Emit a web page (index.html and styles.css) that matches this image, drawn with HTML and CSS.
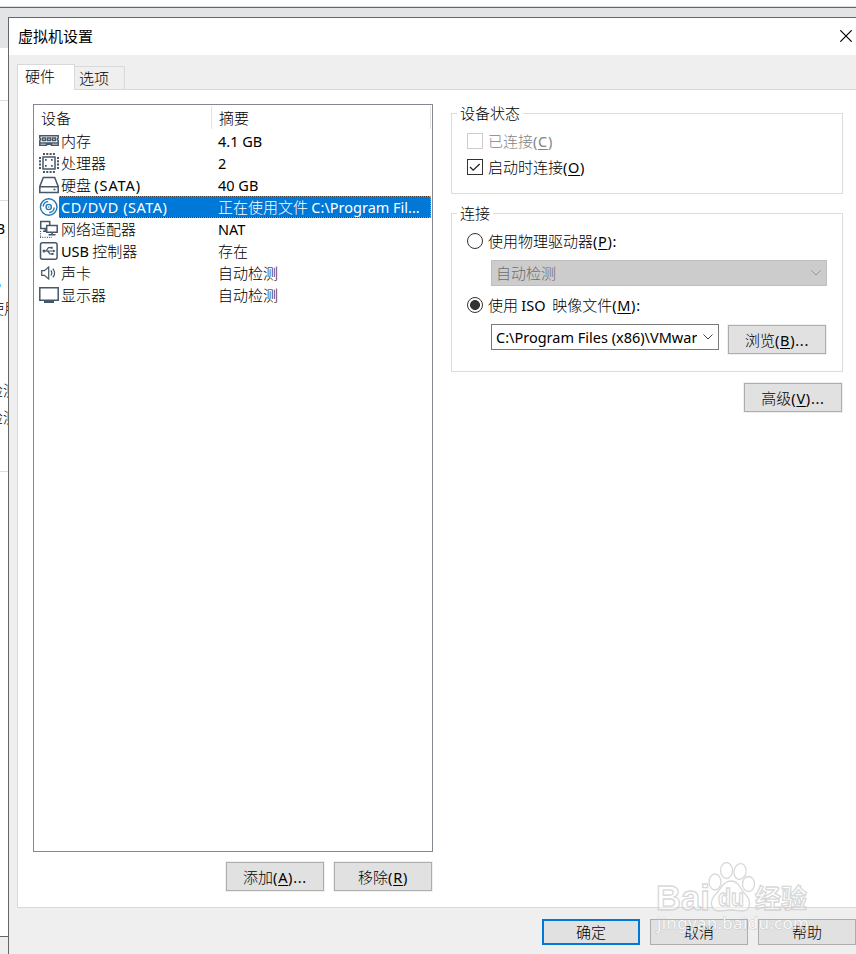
FILE: index.html
```html
<!DOCTYPE html>
<html lang="zh-CN">
<head>
<meta charset="utf-8">
<title>虚拟机设置</title>
<link rel="stylesheet" href="styles.css">
</head>
<body>
<div class="host">
  <div class="host-caption"></div>
  <div class="host-bar"></div>
  <div class="host-body">
    <div class="slice s1"></div>
    <div class="slice s2"></div>
    <div class="slice s3"><span class="peek p1">B</span><span class="dot"></span><span class="peek p2">使用</span><span class="peek p3">检测</span><span class="peek p4">检测</span></div>
    <div class="slice s4"></div>
  </div>
  <div class="host-status"></div>
</div>
<main class="dialog">
  <header class="title"><h1>虚拟机设置</h1>
    <svg width="12" height="12" viewBox="0 0 12 12"><path d="M.3.3 11.7 11.7M11.7.3.3 11.7" stroke="#000" stroke-width="1.15"/></svg>
  </header>
  <nav class="tabs"><div class="tab active">硬件</div><div class="tab">选项</div><div class="tab-rest"></div></nav>
  <section class="panel">
    <div class="left">
      <div class="list">
        <div class="head"><span>设备</span><span>摘要</span></div>
        <div class="row"><svg class="ic" viewBox="0 0 20 20"><path d="M.8 4.800h18.400v2.400l-.8.600v1l.8.600v4.900h-6.700v-1h-5v1H.8V9.400l.8-.6v-1l-.8-.6zM1 12h18" class="ln"/><path d="M3.500 7h3v2.500h-3zM8.500 7h3v2.500h-3zM13.500 7h3v2.500h-3z" class="ln"/></svg><span class="name">内存</span><span class="l v">4.1 GB</span></div>
        <div class="row"><svg class="ic" viewBox="0 0 20 20"><path d="M4 4h12v12H4z" class="ln"/><path d="M4 1h12M4 19h12" class="ln wide" stroke-dasharray="2 1.300"/><path d="M1 4v12M19 4v12" class="ln wide" stroke-dasharray="2 1.300"/><path d="M6 6h1.700v1.700H6zM12 6h1.700v1.700H12zM6 12h1.700v1.700H6zM12 12h1.700v1.700H12z" fill="#455768"/></svg><span class="name">处理器</span><span class="l v">2</span></div>
        <div class="row"><svg class="ic" viewBox="0 0 20 20"><path d="M4.300 2.600h11.400L19.200 11.500v6H.8v-6zM1 11.800h18M14.500 14.600h2" class="ln"/></svg><span class="name">硬盘 <i class="l sata">(SATA)</i></span><span class="l v">40 GB</span></div>
        <div class="row sel"><svg class="ic" viewBox="0 0 20 20"><g fill="none" stroke="#2775b0" stroke-width="1.400"><circle cx="9.700" cy="10" r="8.300"/><circle cx="9.700" cy="10" r="2.600"/><path d="M4.200 9.500a5.300 5.300 0 0 1 5-5M10.200 15.500a5.300 5.300 0 0 0 5-5"/></g><circle cx="9.700" cy="10" r=".8" fill="#2775b0"/></svg><span class="name"><i class="l cd">CD/DVD (SATA)</i></span><span class="v">正在使用文件 <i class="l path">C:\Program Fil...</i></span></div>
        <div class="row"><svg class="ic" viewBox="0 0 20 20"><path d="M1.700 2.500h9v7h-9zM4 12.200h4.500M6.200 9.500v2.500" class="ln"/><path d="M7.700 6.500h10.500v6.700H7.700z" class="ln box"/><path d="M13 13.500v2.300M9.500 15.800h7" class="ln"/><path d="M1.500 12v6M1 18.300h12" class="ln thin" stroke-dasharray="1 1.300"/></svg><span class="name">网络适配器</span><span class="l v">NAT</span></div>
        <div class="row"><svg class="ic" viewBox="0 0 20 20"><rect x="1.500" y="1.700" width="16.600" height="16.600" rx="2" class="ln"/><path d="M4.500 10h11M7 10l2.500-3.300h3M8.500 10l2.500 3h2" class="ln thin"/><circle cx="5" cy="10" r="1.500" fill="#455768"/><path d="M11.700 5.800h2v2h-2zM12.500 12h2v2h-2z" fill="#455768"/><path d="m14 8.400 2.500 1.600-2.500 1.600z" fill="#455768"/></svg><span class="name"><i class="l">USB</i> 控制器</span><span class="v">存在</span></div>
        <div class="row"><svg class="ic" viewBox="0 0 20 20"><path d="M2.700 7.700h2.700L9.700 4v12l-4.300-3.700H2.700zM11.800 7.500a3.500 3.500 0 0 1 0 5M13.800 5.700a6 6 0 0 1 0 8.600" class="ln thin"/></svg><span class="name">声卡</span><span class="v">自动检测</span></div>
        <div class="row"><svg class="ic" viewBox="0 0 20 20"><path d="M.8 2.800h18.400v12.400H.8z" class="ln"/><path d="M5 17h10" class="ln wide"/></svg><span class="name">显示器</span><span class="v">自动检测</span></div>
      </div>
      <div class="actions"><button>添加<i class="l key">(<u>A</u>)...</i></button><button>移除<i class="l key">(<u>R</u>)</i></button></div>
    </div>
    <div class="right">
      <fieldset class="group state"><legend>设备状态</legend>
        <label class="line off"><span class="check"></span>已连接<i class="l key">(<u>C</u>)</i></label>
        <label class="line"><span class="check"><svg width="14" height="14" viewBox="0 0 14 14"><path d="m2 7 3.200 3.200L11.700 4" fill="none" stroke="#222" stroke-width="1.300"/></svg></span>启动时连接<i class="l key">(<u>O</u>)</i></label>
      </fieldset>
      <fieldset class="group conn"><legend>连接</legend>
        <label class="line"><span class="radio"></span>使用物理驱动器<i class="l key">(<u>P</u>):</i></label>
        <div class="combo disabled"><span>自动检测</span><svg width="12" height="8" viewBox="0 0 12 8"><path d="m1.500 1.500 4.500 4.500 4.500-4.500" fill="none" stroke="#999"/></svg></div>
        <label class="line iso"><span class="radio on"></span>使用&nbsp;<i class="l">ISO</i>&nbsp;&nbsp;映像文件<i class="l key">(<u>M</u>):</i></label>
        <div class="file"><div class="combo"><span class="l">C:\Program Files (x86)\VMwar</span><svg width="12" height="8" viewBox="0 0 12 8"><path d="m1.500 1.500 4.500 4.500 4.500-4.500" fill="none" stroke="#444"/></svg></div><button>浏览<i class="l key">(<u>B</u>)...</i></button></div>
      </fieldset>
      <button class="adv">高级<i class="l key">(<u>V</u>)...</i></button>
    </div>
  </section>
  <footer class="foot"><button class="ok">确定</button><button>取消</button><button>帮助</button></footer>
  <svg class="mark" width="160" height="80" viewBox="0 0 160 80">
    <g class="ink"><text x="4" y="50" font-size="35" textLength="54" lengthAdjust="spacingAndGlyphs">Bai</text>
    <ellipse cx="63" cy="22" rx="6" ry="8"/><ellipse cx="74.500" cy="10.500" rx="6" ry="8"/><ellipse cx="88" cy="11.500" rx="6" ry="8" transform="rotate(10 88 11.500)"/><ellipse cx="96.500" cy="24" rx="6" ry="7.500"/>
    <path d="M79 21c8 0 9 8 15 14 6 7 4 16-4 16-5 0-7-1-11-1s-7 1-12 1c-8 0-10-9-4-16 6-6 8-14 16-14z"/>
    <text x="66" y="46" font-size="23" textLength="26" lengthAdjust="spacingAndGlyphs">du</text><text x="103" y="48" class="cjk" font-size="26" textLength="52">经验</text></g>
    <text class="url" x="5" y="69" textLength="152">jingyan.baidu.com</text>
  </svg>
</main>
</body>
</html>
```
FILE: styles.css
```css
* { box-sizing: border-box; }
body { margin: 0; width: 856px; height: 954px; overflow: hidden; position: relative; font: 15px/22px "Noto Sans CJK SC", sans-serif; font-weight: 300; color: #000; background: #fff; }
i { font-style: normal; }
.l { font-family: "Noto Sans", sans-serif; font-size: 14.5px; font-weight: 400; }
.key { letter-spacing: .7px; }
.sata { letter-spacing: .9px; }
.cd { letter-spacing: .5px; }
.host { display: flex; flex-direction: column; height: 954px; }
.host-caption { height: 8px; background: #fff; border-bottom: 1px solid #666; box-shadow: inset 0 -1px #ddd; }
.host-bar { height: 40px; background: #e3e4e6; }
.host-body { flex: 1; }
.slice { width: 8px; border-bottom: 1px solid #ddd; overflow: hidden; position: relative; }
.s1 { height: 53px; }
.s2 { height: 100px; }
.s3 { height: 271px; }
.s4 { height: 464px; border: 0; }
.host-status { height: 18px; border-top: 1px solid #666; background: #eee; }
.peek { position: absolute; right: 2px; line-height: 20px; white-space: nowrap; font-size: 15px; }
.p1 { top: 18px; right: 3px; font-family: "Noto Sans", sans-serif; font-size: 14px; font-weight: 400; }
.p2 { top: 97px; right: -11px; }
.p3 { top: 179px; right: -20px; }
.p4 { top: 206px; right: -20px; }
.p3, .p4 { right: -10px; }
.dot { position: absolute; top: 83px; left: -1px; width: 2px; height: 3px; background: #6cf; }
.dialog { position: absolute; left: 8px; top: 17px; width: 848px; height: 937px; border: solid #666; border-width: 1px 0 0 1px; background: #efefef; display: flex; flex-direction: column; }
.title { height: 37px; background: #fff; display: flex; align-items: center; justify-content: space-between; padding: 0 4px 2px 9px; }
h1 { margin: 0; font-size: 15px; font-weight: 400; }
.tabs { height: 35px; padding-left: 8px; display: flex; align-items: flex-end; }
.tab { width: 50px; height: 24px; border: 1px solid #d9d9d9; border-left: 0; padding-left: 4px; line-height: 21px; }
.tab.active { width: 58px; height: 26px; border: 1px solid #d9d9d9; border-bottom: 0; background: #fff; padding-left: 7px; line-height: 22px; }
.tab-rest { flex: 1; align-self: flex-end; height: 1px; background: #d9d9d9; }
.panel { margin-left: 8px; height: 818px; background: #fff; border-left: 1px solid #d9d9d9; border-bottom: 1px solid #d9d9d9; display: flex; padding: 14px 0 0 15px; gap: 18px; }
.left { width: 400px; }
.list { height: 748px; border: 1px solid #828790; }
.head { height: 25px; display: grid; grid-template-columns: 178px 219px; padding-top: 1px; }
.head span { border-right: 1px solid #e2e2e2; padding-left: 7px; line-height: 23px; height: 23px; }
.row { height: 22px; display: grid; grid-template-columns: 25px 152px 1fr; align-items: stretch; padding-right: 1px; white-space: pre; }
.ic { width: 20px; height: 20px; margin: 1px 0 0 5px; }
.name, .v { padding-left: 2px; line-height: 22px; overflow: hidden; }
.v { padding-left: 7px; }
.sel .name, .sel .v { background: repeating-linear-gradient(90deg, #ff8728 0 1px, #3a3a3a 1px 2px) top / 100% 1px no-repeat, repeating-linear-gradient(90deg, #ff8728 0 1px, #3a3a3a 1px 2px) bottom / 100% 1px no-repeat, #0078d7; color: #fff; }
.sel .v { border-right: 1px dotted #ff8728; }
.ln { fill: none; stroke: #455768; stroke-width: 1.5; }
.thin { stroke-width: 1.2; }
.box { fill: #fff; }
.wide { stroke-width: 2; }
button { width: 98px; height: 29px; padding: 0; border: 1px solid #adadad; background: #e1e1e1; font: inherit; line-height: 25px; color: #000; outline: 1px solid #f0f0f0; white-space: nowrap; }
.actions { display: flex; justify-content: flex-end; gap: 10px; margin-top: 10px; padding-right: 1px; }
u { text-underline-offset: 2px; text-decoration-thickness: 1px; }
.right { width: 392px; padding-top: 9px; display: flex; flex-direction: column; }
.group { margin: 0; padding: 0; border: 1px solid #dcdcdc; display: block; position: relative; min-width: 0; }
legend { position: absolute; top: -12px; left: 5px; background: #fff; padding: 0 3px; line-height: 22px; }
.state { height: 81px; padding: 16px 0 0 15px; }
.conn { height: 159px; margin-top: 19px; padding: 16px 0 0 15px; }
.line { display: flex; align-items: center; height: 22px; margin-bottom: 4px; white-space: pre; }
.off { color: #838383; }
.check { width: 16px; height: 16px; border: 1px solid #333; margin-right: 5px; display: flex; }
.off .check { border-color: #ccc; }
.radio { width: 16px; height: 16px; border: 1px solid #333; border-radius: 50%; margin-right: 5px; }
.on { background: radial-gradient(circle, #333 0 4.6px, #fff 5.3px); }
.combo { width: 228px; height: 26px; border: 1px solid #7a7a7a; background: #fff; display: flex; align-items: center; justify-content: space-between; padding: 0 4px; white-space: pre; }
.combo .l { width: 201px; overflow: hidden; }
.combo svg { flex: none; }
.disabled { width: 336px; background: #ccc; border-color: #bfbfbf; color: #6d6d6d; margin: 8px 0 0 24px; }
.iso { margin: 8px 0; }
.file { display: flex; gap: 9px; margin-left: 24px; align-items: flex-start; }
.file button { margin-top: 1px; }
.adv { align-self: flex-end; margin: 11px 1px 0 0; }
.foot { display: flex; gap: 10px; justify-content: flex-end; padding-top: 11px; }
.foot button { width: 98px; height: 26px; line-height: 22px; outline: 0; }
.foot .ok { border: 2px solid #0078d7; line-height: 20px; }
.mark { position: absolute; left: 643px; top: 842px; opacity: .75; pointer-events: none; }
.ink { fill: #fff; fill-opacity: .6; stroke: #ccc; stroke-width: 1.3; font-family: "Liberation Sans"; font-weight: 700; }
.cjk { font-family: "Noto Sans CJK SC"; }
.url { font: 17px "Noto Sans"; fill: #fff; stroke: #bbb; stroke-width: .9; paint-order: stroke; }
```
